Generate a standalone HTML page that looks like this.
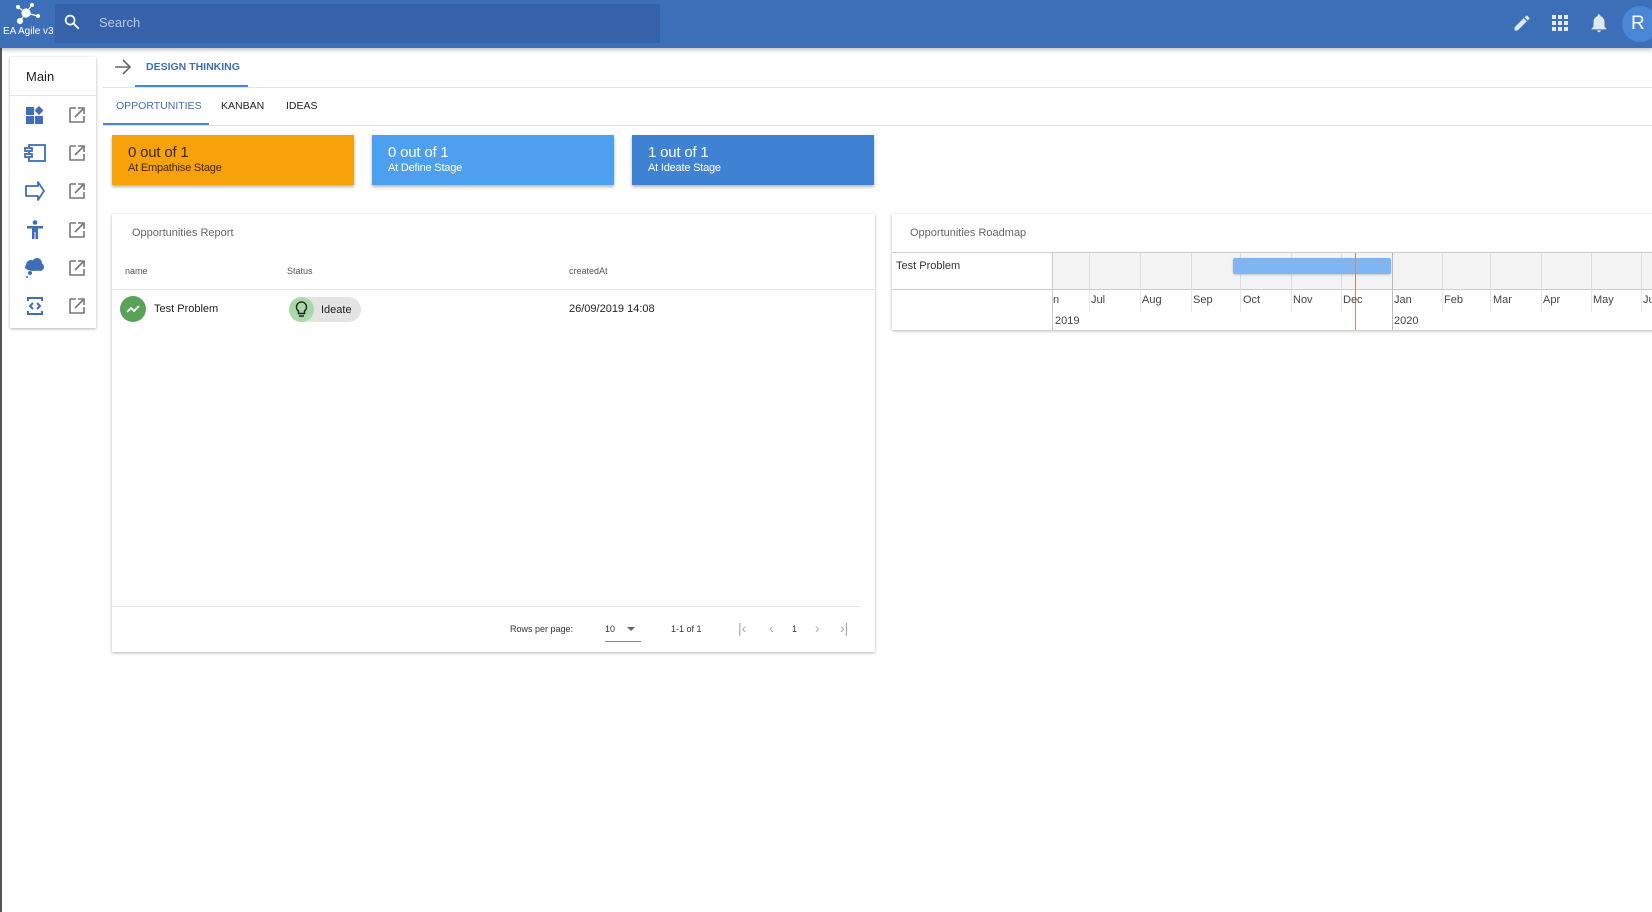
<!DOCTYPE html>
<html><head><meta charset="utf-8"><style>
*{box-sizing:border-box;margin:0;padding:0}
body{width:1652px;height:912px;overflow:hidden;background:#fff;font-family:"Liberation Sans",sans-serif;position:relative;color:#222}
.a{position:absolute}
.top{left:0;top:0;width:1652px;height:48px;background:#3d6fb8;box-shadow:0 2px 4px rgba(0,0,0,.25)}
.search{left:55px;top:4px;width:605px;height:39px;background:#3562a8;border-radius:2px}
.card{background:#fff;box-shadow:0 1px 3px rgba(0,0,0,.3)}
.stage{color:#fff;box-shadow:0 2px 3px rgba(0,0,0,.3)}
.stage .n{position:absolute;left:16px;top:9px;font-size:15px;letter-spacing:-0.2px}
.stage .s{position:absolute;left:16px;top:27px;font-size:11px;letter-spacing:-0.2px}
.ext{stroke:#777;fill:none;stroke-width:1.6}
.mo{position:absolute;top:294px;font-size:11px;color:#444}
.vl{position:absolute;top:253px;height:37px;width:1px;background:#ddd}
.vl2{position:absolute;top:290px;height:22px;width:1px;background:#e8e8e8}
</style></head><body>
<div class="a" style="left:0;top:0;width:2px;height:912px;background:#555"></div>
<div class="a top"></div>
<svg class="a" style="left:12px;top:3px" width="32" height="24" viewBox="0 0 32 24"><g stroke="#fff" stroke-width="1.2" fill="#fff"><line x1="14" y1="10" x2="20" y2="2"/><line x1="14" y1="10" x2="26" y2="13"/><line x1="14" y1="10" x2="8" y2="18"/><line x1="14" y1="10" x2="6" y2="4"/><circle cx="14" cy="10" r="4"/><circle cx="20" cy="2" r="1.5"/><circle cx="26" cy="13" r="1.5"/><circle cx="8" cy="18" r="2.5"/><circle cx="6" cy="4" r="1.5"/></g></svg>
<div class="a" style="left:3px;top:26px;font-size:10px;color:#fff">EA Agile v3</div>
<div class="a search"></div>
<svg class="a" style="left:63px;top:13px" width="18" height="18" viewBox="0 0 24 24"><circle cx="9.5" cy="9.5" r="6" stroke="#fff" stroke-width="2.2" fill="none"/><line x1="14" y1="14" x2="21" y2="21" stroke="#fff" stroke-width="2.5"/></svg>
<div class="a" style="left:99px;top:15px;font-size:13px;color:#b8c9e6">Search</div>
<svg class="a" style="left:1512px;top:13px" width="20" height="20" viewBox="0 0 24 24"><path d="M3 17.25V21h3.75L17.81 9.94l-3.75-3.75zM20.71 7.04a1 1 0 000-1.41l-2.34-2.34a1 1 0 00-1.41 0l-1.83 1.83 3.75 3.75z" fill="#dfe8f5"/></svg>
<svg class="a" style="left:1552px;top:15px" width="16" height="16" viewBox="0 0 16 16" fill="#dfe8f5"><rect x="0" y="0" width="4" height="4"/><rect x="6" y="0" width="4" height="4"/><rect x="12" y="0" width="4" height="4"/><rect x="0" y="6" width="4" height="4"/><rect x="6" y="6" width="4" height="4"/><rect x="12" y="6" width="4" height="4"/><rect x="0" y="12" width="4" height="4"/><rect x="6" y="12" width="4" height="4"/><rect x="12" y="12" width="4" height="4"/></svg>
<svg class="a" style="left:1588px;top:12px" width="22" height="22" viewBox="0 0 24 24"><path d="M12 22c1.1 0 2-.9 2-2h-4c0 1.1.9 2 2 2zm6-6v-5c0-3.07-1.64-5.64-4.5-6.32V4a1.5 1.5 0 00-3 0v.68C7.63 5.36 6 7.92 6 11v5l-2 2v1h16v-1z" fill="#dfe8f5"/></svg>
<div class="a" style="left:1622px;top:6px;width:36px;height:36px;border-radius:50%;background:#4a86d6;color:#fff;font-size:19px;line-height:36px;padding-left:9px">R</div>

<div class="a card" style="left:10px;top:57px;width:86px;height:271px"></div>
<div class="a" style="left:26px;top:69px;font-size:13px">Main</div>
<div class="a" style="left:10px;top:95px;width:86px;height:1px;background:#e5e5e5"></div>
<svg class="a" style="left:25px;top:105px" width="20" height="20" viewBox="0 0 20 20"><g fill="#3d6fb8"><rect x="1" y="2" width="8" height="8"/><rect x="1" y="11" width="8" height="8"/><rect x="10" y="11" width="8" height="8"/><path d="M14 1l4.5 4.5L14 10 9.5 5.5z"/></g></svg>
<svg class="a" style="left:24px;top:143px" width="22" height="20" viewBox="0 0 22 20"><g fill="none" stroke="#3d6fb8" stroke-width="1.8"><rect x="5" y="2" width="16" height="16"/><rect x="1" y="5" width="7" height="3" fill="#fff"/><rect x="1" y="11" width="7" height="3" fill="#fff"/></g></svg>
<svg class="a" style="left:24px;top:180px" width="22" height="22" viewBox="0 0 22 22"><path d="M2 6h12V2l6 9-6 9v-4H2z" fill="none" stroke="#3d6fb8" stroke-width="1.8" stroke-linejoin="round"/></svg>
<svg class="a" style="left:26px;top:220px" width="18" height="20" viewBox="0 0 18 20" fill="#3d6fb8"><circle cx="9" cy="2.5" r="2.3"/><rect x="1" y="6" width="16" height="2.5"/><rect x="6" y="6" width="6" height="6"/><rect x="6" y="11" width="2.5" height="8"/><rect x="9.5" y="11" width="2.5" height="8"/></svg>
<svg class="a" style="left:24px;top:258px" width="22" height="20" viewBox="0 0 22 20" fill="#3d6fb8"><circle cx="7" cy="7" r="5"/><circle cx="13" cy="5" r="5"/><circle cx="16" cy="9" r="4"/><ellipse cx="10" cy="9" rx="9" ry="4"/><circle cx="6" cy="15" r="2"/><circle cx="3" cy="19" r="1"/></svg>
<svg class="a" style="left:26px;top:296px" width="18" height="20" viewBox="0 0 18 20"><g fill="none" stroke="#3d6fb8" stroke-width="2"><path d="M2 5V2h14v3M2 15v3h14v-3"/><path d="M7 7l-3 3 3 3M11 7l3 3-3 3"/></g></svg>
<svg class="a" style="left:68px;top:106px" width="18" height="230" viewBox="0 0 18 230"><g class="ext"><g id="e"><path d="M2 2h6M2 2v14h14v-6M10 2h6v6M16 2l-9 9"/></g><use href="#e" y="38"/><use href="#e" y="76"/><use href="#e" y="115"/><use href="#e" y="153"/><use href="#e" y="191"/></g></svg>

<div class="a" style="left:103px;top:87px;width:1549px;height:1px;background:#e2e2e2"></div>
<svg class="a" style="left:114px;top:59px" width="18" height="16" viewBox="0 0 18 16"><path d="M1 8h15M9 1l7 7-7 7" fill="none" stroke="#666" stroke-width="1.6"/></svg>
<div class="a" style="left:146px;top:61px;font-size:10.5px;color:#3d6fb8;font-weight:bold">DESIGN THINKING</div>
<div class="a" style="left:135px;top:85px;width:113px;height:2px;background:#4a86d6"></div>
<div class="a" style="left:103px;top:125px;width:1549px;height:1px;background:#e2e2e2"></div>
<div class="a" style="left:116px;top:100px;font-size:10.5px;color:#3d6fb8">OPPORTUNITIES</div>
<div class="a" style="left:221px;top:100px;font-size:10.5px;color:#222">KANBAN</div>
<div class="a" style="left:286px;top:100px;font-size:10.5px;color:#222">IDEAS</div>
<div class="a" style="left:103px;top:123px;width:106px;height:2px;background:#4a86d6"></div>

<div class="a stage" style="left:112px;top:135px;width:242px;height:50px;background:#f7a10b;color:#3a2a00"><div class="n">0 out of 1</div><div class="s">At Empathise Stage</div></div>
<div class="a stage" style="left:372px;top:135px;width:242px;height:50px;background:#4d9ff0"><div class="n">0 out of 1</div><div class="s">At Define Stage</div></div>
<div class="a stage" style="left:632px;top:135px;width:242px;height:50px;background:#3f82d4"><div class="n">1 out of 1</div><div class="s">At Ideate Stage</div></div>

<div class="a card" style="left:112px;top:214px;width:763px;height:438px"></div>
<div class="a" style="left:132px;top:227px;font-size:11px;color:#666">Opportunities Report</div>
<div class="a" style="left:125px;top:266px;font-size:9px;color:#555">name</div>
<div class="a" style="left:287px;top:266px;font-size:9px;color:#555">Status</div>
<div class="a" style="left:569px;top:266px;font-size:9px;color:#555">createdAt</div>
<div class="a" style="left:112px;top:289px;width:763px;height:1px;background:#e5e5e5"></div>
<div class="a" style="left:120px;top:296px;width:26px;height:26px;border-radius:50%;background:#5aa25a"></div>
<svg class="a" style="left:125px;top:302px" width="16" height="14" viewBox="0 0 16 14"><path d="M2 10l4-4 3 3 5-5" fill="none" stroke="#fff" stroke-width="1.8"/></svg>
<div class="a" style="left:154px;top:303px;font-size:11px">Test Problem</div>
<div class="a" style="left:289px;top:297px;width:72px;height:25px;border-radius:13px;background:#e3e3e3"></div>
<div class="a" style="left:289px;top:297px;width:25px;height:25px;border-radius:50%;background:#a9d8a9"></div>
<svg class="a" style="left:295px;top:301px" width="13" height="17" viewBox="0 0 13 17"><path d="M6.5 1a5 5 0 00-3 9v2.5h6V10a5 5 0 00-3-9zM4 15h5" fill="none" stroke="#222" stroke-width="1.5"/></svg>
<div class="a" style="left:321px;top:304px;font-size:11px">Ideate</div>
<div class="a" style="left:569px;top:303px;font-size:11px">26/09/2019 14:08</div>
<div class="a" style="left:112px;top:606px;width:749px;height:1px;background:#e5e5e5"></div>
<div class="a" style="left:510px;top:624px;font-size:9px;color:#333">Rows per page:</div>
<div class="a" style="left:605px;top:624px;font-size:9px;color:#333">10</div>
<svg class="a" style="left:627px;top:627px" width="8" height="5"><path d="M0 0h8L4 4z" fill="#666"/></svg>
<div class="a" style="left:605px;top:641px;width:36px;height:1px;background:#888"></div>
<div class="a" style="left:671px;top:624px;font-size:9px;color:#333">1-1 of 1</div>
<div class="a" style="left:738px;top:620px;font-size:14px;color:#aaa">|&lsaquo;</div>
<div class="a" style="left:769px;top:620px;font-size:14px;color:#aaa">&lsaquo;</div>
<div class="a" style="left:792px;top:624px;font-size:9px;color:#333">1</div>
<div class="a" style="left:815px;top:620px;font-size:14px;color:#aaa">&rsaquo;</div>
<div class="a" style="left:840px;top:620px;font-size:14px;color:#aaa">&rsaquo;|</div>

<div class="a card" style="left:892px;top:214px;width:770px;height:116px"></div>
<div class="a" style="left:910px;top:227px;font-size:11px;color:#666">Opportunities Roadmap</div>
<div class="a" style="left:892px;top:252px;width:760px;height:1px;background:#ccc"></div>
<div class="a" style="left:1052px;top:253px;width:600px;height:37px;background:#f3f3f3"></div>
<div class="a" style="left:892px;top:289px;width:760px;height:1px;background:#ccc"></div>
<div class="a" style="left:1052px;top:253px;width:1px;height:77px;background:#ccc"></div>
<div class="a" style="left:896px;top:260px;font-size:11px;color:#333">Test Problem</div>
<div class="vl" style="left:1089px"></div><div class="vl" style="left:1140px"></div><div class="vl" style="left:1191px"></div><div class="vl" style="left:1240px"></div><div class="vl" style="left:1291px"></div><div class="vl" style="left:1341px"></div><div class="vl" style="left:1392px;background:#bbb;height:77px"></div><div class="vl" style="left:1442px"></div><div class="vl" style="left:1490px"></div><div class="vl" style="left:1541px"></div><div class="vl" style="left:1591px"></div><div class="vl" style="left:1641px"></div>
<div class="vl2" style="left:1089px"></div><div class="vl2" style="left:1140px"></div><div class="vl2" style="left:1191px"></div><div class="vl2" style="left:1240px"></div><div class="vl2" style="left:1291px"></div><div class="vl2" style="left:1341px"></div><div class="vl2" style="left:1442px"></div><div class="vl2" style="left:1490px"></div><div class="vl2" style="left:1541px"></div><div class="vl2" style="left:1591px"></div><div class="vl2" style="left:1641px"></div>
<div class="a" style="left:1233px;top:258px;width:158px;height:16px;background:#7db6f3;border-radius:2px;box-shadow:0 1px 2px rgba(0,0,0,.2)"></div>
<div class="a" style="left:1355px;top:253px;width:1px;height:77px;background:#d9826a"></div>
<div class="mo" style="left:1053px">n</div><div class="mo" style="left:1091px">Jul</div><div class="mo" style="left:1142px">Aug</div><div class="mo" style="left:1193px">Sep</div><div class="mo" style="left:1243px">Oct</div><div class="mo" style="left:1293px">Nov</div><div class="mo" style="left:1343px">Dec</div><div class="mo" style="left:1394px">Jan</div><div class="mo" style="left:1444px">Feb</div><div class="mo" style="left:1493px">Mar</div><div class="mo" style="left:1543px">Apr</div><div class="mo" style="left:1593px">May</div><div class="mo" style="left:1643px">Ju</div>
<div class="mo" style="left:1055px;top:315px">2019</div><div class="mo" style="left:1394px;top:315px">2020</div>
</body></html>
